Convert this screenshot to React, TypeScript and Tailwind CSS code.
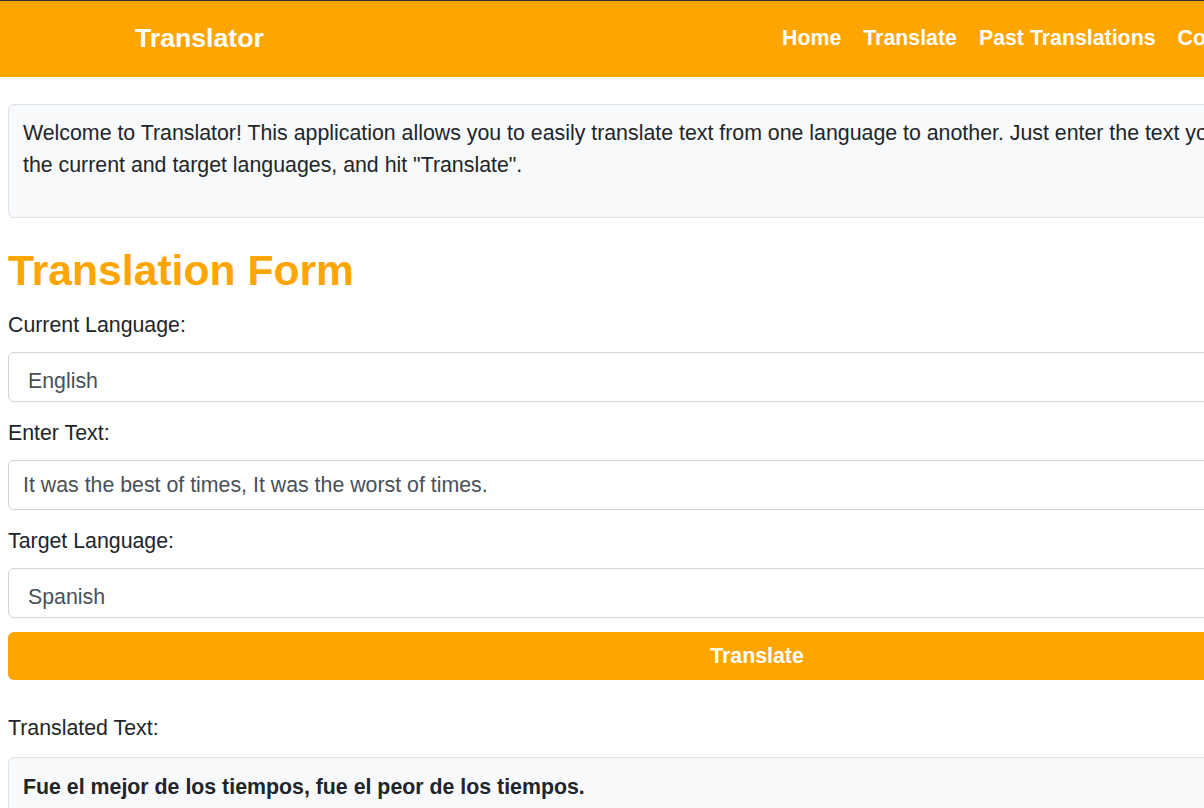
import React from "react";

const font = { fontFamily: '"Liberation Sans", Arial, sans-serif' };

export default function App() {
  return (
    <div className="w-screen h-screen overflow-hidden bg-white" style={font}>
      <div className="w-[1514px]">
        <div className="h-px bg-[#2b2a33]" />
        <header className="h-[76px] bg-[#FFA500] flex items-center">
          <div className="w-[782px] pl-[135px] shrink-0">
            <span className="text-[26.67px] font-bold text-white leading-none">Translator</span>
          </div>
          <nav className="flex gap-[22px] text-[21.33px] font-bold text-white">
            <a>Home</a>
            <a>Translate</a>
            <a>Past Translations</a>
            <a>Contact</a>
          </nav>
        </header>

        <main className="px-2 pt-[27px] text-[#212529] text-[21.33px] leading-[32px]">
          <div className="border border-[#dee2e6] bg-[#f8f9fa] rounded-[6px] px-[14px] pt-[12px] pb-[35px] h-[114px]">
            <p>
              Welcome to Translator! This application allows you to easily translate text from one language to another. Just enter the text you wish to translate, select
              <br />
              the current and target languages, and hit "Translate".
            </p>
          </div>

          <h1 className="mt-[27px] mb-[13px] text-[42.67px] leading-[51px] font-bold text-[#FFA500]">
            Translation Form
          </h1>

          <div className="mb-[15px]">
            <label className="block mb-[11px]">Current Language:</label>
            <div className="h-[50px] border border-[#ced4da] rounded-[6px] pl-[19px] pt-[12px] text-[#495057] overflow-hidden leading-[32px]">
              English
            </div>
          </div>

          <div className="mb-[15px]">
            <label className="block mb-[11px]">Enter Text:</label>
            <div className="h-[50px] border border-[#ced4da] rounded-[6px] px-[14px] flex items-center text-[#495057] overflow-hidden whitespace-nowrap">
              It was the best of times, It was the worst of times.
            </div>
          </div>

          <div className="mb-[14px]">
            <label className="block mb-[11px]">Target Language:</label>
            <div className="h-[50px] border border-[#ced4da] rounded-[6px] pl-[19px] pt-[12px] text-[#495057] overflow-hidden leading-[32px]">
              Spanish
            </div>
          </div>

          <button className="w-full h-[48px] bg-[#FFA500] rounded-[6px] text-white font-bold flex items-center justify-center">
            Translate
          </button>

          <div className="mt-[32px]">
            <label className="block mb-[13px]">Translated Text:</label>
            <div className="border border-[#dee2e6] bg-[#f8f9fa] rounded-[6px] px-[14px] pt-[13px] pb-[40px]">
              <p className="font-bold">Fue el mejor de los tiempos, fue el peor de los tiempos.</p>
            </div>
          </div>
        </main>
      </div>
    </div>
  );
}
